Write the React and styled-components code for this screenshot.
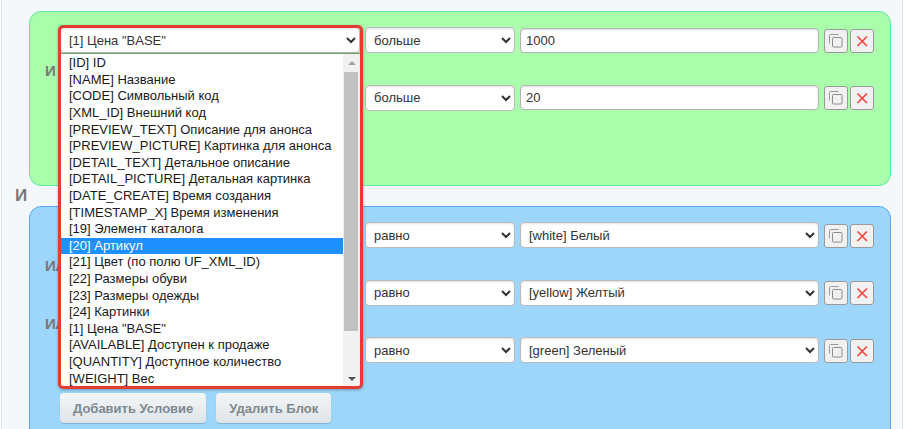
import React from 'react';
import styled, { createGlobalStyle } from 'styled-components';

const GlobalStyle = createGlobalStyle`
  html, body {
    margin: 0;
    height: 100%;
    overflow: hidden;
    background: #ffffff;
    font-family: "Liberation Sans", Arial, sans-serif;
  }
`;

const Page = styled.div`
  width: 902px;
  height: 429px;
  margin-left: 1px;
  background: #f5f8fa;
  border-left: 1px solid #dfe3e6;
  border-right: 1px solid #dfe3e6;
  overflow: hidden;
  padding: 11px 0 0 27px;
  box-sizing: border-box;
`;

const Block = styled.div`
  width: 862px;
  box-sizing: border-box;
  height: ${({ $height }) => $height}px;
  padding: 15.5px 0 0 15px;
  border: 1px solid ${({ $color }) => ($color === 'green' ? '#5fe8a4' : '#5aa9f2')};
  border-radius: 12px;
  background: ${({ $color }) => ($color === 'green' ? '#aafdab' : '#9dd6fa')};
`;

const BlockJoin = styled.div`
  height: 20px;
  margin-left: -14px;
  font-size: 17px;
  font-weight: bold;
  line-height: 20px;
  color: #777;
`;

const RowJoin = styled.div`
  height: 32px;
  font-size: 15px;
  font-weight: bold;
  line-height: 35px;
  color: #777;
`;

const Row = styled.div`
  display: flex;
  align-items: center;
  height: 25.5px;
  margin-left: 15px;
`;

const FieldCell = styled.div`
  position: relative;
  flex: none;
  width: 300px;
  margin-right: 5px;
`;

const Select = styled.select`
  display: block;
  flex: none;
  width: ${({ $width }) => $width}px;
  height: 26px;
  margin-right: ${({ $gap }) => $gap || 0}px;
  box-sizing: border-box;
  padding: 0 4px;
  border: 1px solid #bbb;
  border-radius: 4px;
  background-color: #fff;
  box-shadow: inset 0 1px 2px rgba(0, 0, 0, 0.12);
  font-family: inherit;
  font-size: 13px;
  color: #333;
`;

const Input = styled.input`
  flex: none;
  width: 299px;
  height: 25px;
  margin-right: 5px;
  box-sizing: border-box;
  padding: 0 5px;
  border: 1px solid #b4b4b4;
  border-radius: 4px;
  background: #fff;
  box-shadow: inset 0 1px 2px rgba(0, 0, 0, 0.14);
  font-family: inherit;
  font-size: 13px;
  color: #333;
`;

const IconButton = styled.button`
  display: flex;
  flex: none;
  align-items: center;
  justify-content: center;
  width: 24px;
  height: 24px;
  margin: 1px 2px 0 0;
  padding: 0;
  box-sizing: border-box;
  border: 1.5px solid #9a9a9a;
  border-radius: 3px;
  background: #f1f1f1;
`;

const Actions = styled.div`
  display: flex;
  gap: 10px;
  margin: 30px 0 0 15px;
`;

const ActionButton = styled.button`
  height: 30px;
  padding: 0 13px;
  border: 0;
  border-radius: 4px;
  background: linear-gradient(#f4f6f7, #dde4e8);
  box-shadow: 0 1px 1px rgba(0, 0, 0, 0.18);
  font-family: inherit;
  font-size: 13px;
  font-weight: bold;
  color: #7f898e;
`;

const Dropdown = styled.div`
  position: absolute;
  z-index: 5;
  top: -2px;
  left: -2px;
  width: 305px;
  height: 364px;
  box-sizing: border-box;
  border: 3px solid #e53c32;
  border-radius: 5px;
  box-shadow: 0 1px 3px rgba(0, 0, 0, 0.3);
  pointer-events: none;
`;

const DropdownList = styled.div`
  display: flex;
  position: absolute;
  z-index: 4;
  top: 27px;
  left: 1px;
  width: 299px;
  height: 332px;
  background: #fff;
  box-shadow: 0 -1px 1px rgba(0, 0, 0, 0.35);
`;

const Options = styled.div`
  flex: 1;
  min-width: 0;
  padding-top: 1px;
`;

const Option = styled.div`
  height: 16.6px;
  padding-left: 8px;
  font-size: 13px;
  line-height: 16.6px;
  white-space: nowrap;
  color: ${({ $active }) => ($active ? '#fff' : '#1a1a1a')};
  background: ${({ $active }) => ($active ? '#1e90ff' : 'transparent')};
`;

const Scrollbar = styled.div`
  display: flex;
  flex-direction: column;
  align-items: center;
  width: 17px;
  background: #f1f1f1;
`;

const ScrollArrow = styled.div`
  flex: none;
  width: 0;
  height: 0;
  margin: ${({ $down }) => ($down ? '6px 0 5px' : '7px 0 6.5px')};
  border-left: 4px solid transparent;
  border-right: 4px solid transparent;
  border-${({ $down }) => ($down ? 'top' : 'bottom')}: 4px solid ${({ $down }) => ($down ? '#505050' : '#a3a3a3')};
`;

const ScrollTrack = styled.div`
  flex: 1;
  align-self: stretch;
  padding: 0 2px 0 1px;
`;

const ScrollThumb = styled.div`
  height: 259px;
  background: #c1c1c1;
`;

const CopyIcon = () => (
  <svg width="16" height="16" viewBox="0 0 16 16" fill="none">
    <path d="M10.5 1.5H2.5a1 1 0 0 0-1 1V10.5" stroke="#999" />
    <rect x="4.5" y="4.5" width="9.5" height="9.5" rx="1" stroke="#8c8c8c" />
  </svg>
);

const CrossIcon = () => (
  <svg width="14" height="14" viewBox="0 0 14 14" fill="none">
    <path d="M2.5 2.5l9.5 9.5M12 2.5L2.5 12" stroke="#f4433c" strokeWidth="1.6" />
  </svg>
);

const FIELDS = [
  '[ID] ID',
  '[NAME] Название',
  '[CODE] Символьный код',
  '[XML_ID] Внешний код',
  '[PREVIEW_TEXT] Описание для анонса',
  '[PREVIEW_PICTURE] Картинка для анонса',
  '[DETAIL_TEXT] Детальное описание',
  '[DETAIL_PICTURE] Детальная картинка',
  '[DATE_CREATE] Время создания',
  '[TIMESTAMP_X] Время изменения',
  '[19] Элемент каталога',
  '[20] Артикул',
  '[21] Цвет (по полю UF_XML_ID)',
  '[22] Размеры обуви',
  '[23] Размеры одежды',
  '[24] Картинки',
  '[1] Цена "BASE"',
  '[AVAILABLE] Доступен к продаже',
  '[QUANTITY] Доступное количество',
  '[WEIGHT] Вес',
];

function FieldSelect({ value, open }) {
  return (
    <FieldCell>
      <Select $width={300} defaultValue={value}>
        {FIELDS.map((f) => <option key={f}>{f}</option>)}
      </Select>
      {open && (
        <>
          <DropdownList>
            <Options>
              {FIELDS.map((f) => (
                <Option key={f} $active={f.startsWith('[20]')}>{f}</Option>
              ))}
            </Options>
            <Scrollbar>
              <ScrollArrow />
              <ScrollTrack><ScrollThumb /></ScrollTrack>
              <ScrollArrow $down />
            </Scrollbar>
          </DropdownList>
          <Dropdown />
        </>
      )}
    </FieldCell>
  );
}

function Condition({ field, op, value, input, open }) {
  return (
    <Row>
      <FieldSelect value={field} open={open} />
      <Select $width={150} $gap={5} defaultValue={op}>
        <option>больше</option>
        <option>равно</option>
      </Select>
      {input ? (
        <Input defaultValue={value} />
      ) : (
        <Select $width={299} $gap={5} defaultValue={value}>
          <option>{value}</option>
        </Select>
      )}
      <IconButton><CopyIcon /></IconButton>
      <IconButton><CrossIcon /></IconButton>
    </Row>
  );
}

function BlockActions() {
  return (
    <Actions>
      <ActionButton>Добавить Условие</ActionButton>
      <ActionButton>Удалить Блок</ActionButton>
    </Actions>
  );
}

function App() {
  return (
    <Page>
      <GlobalStyle />
      <Block $color="green" $height={175}>
        <Condition open field={'[1] Цена "BASE"'} op="больше" value="1000" input />
        <RowJoin>И</RowJoin>
        <Condition field="[20] Артикул" op="больше" value="20" input />
      </Block>
      <BlockJoin>И</BlockJoin>
      <Block $color="blue" $height={240}>
        <Condition field="[21] Цвет (по полю UF_XML_ID)" op="равно" value="[white] Белый" />
        <RowJoin>ИЛИ</RowJoin>
        <Condition field="[21] Цвет (по полю UF_XML_ID)" op="равно" value="[yellow] Желтый" />
        <RowJoin>ИЛИ</RowJoin>
        <Condition field="[21] Цвет (по полю UF_XML_ID)" op="равно" value="[green] Зеленый" />
        <BlockActions />
      </Block>
    </Page>
  );
}

export default App;
